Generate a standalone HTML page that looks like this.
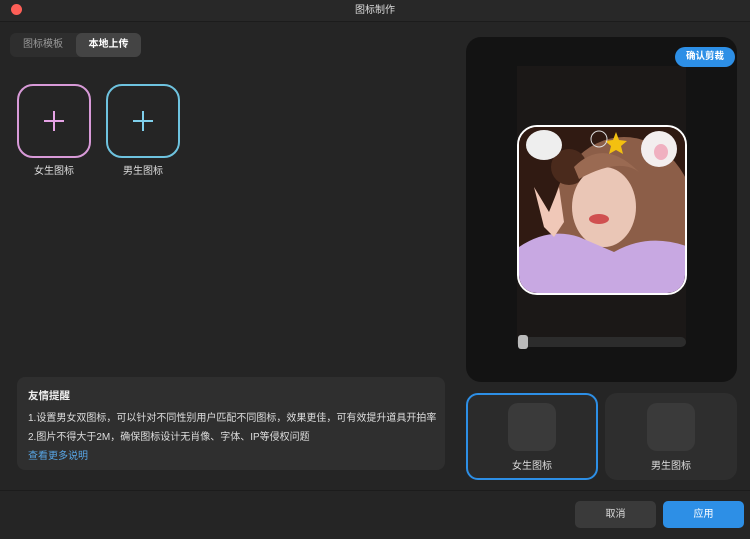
<!DOCTYPE html>
<html><head><meta charset="utf-8"><style>
*{margin:0;padding:0;box-sizing:border-box}
body{width:750px;height:539px;background:#252525;font-family:"Liberation Sans","Noto Sans CJK SC",sans-serif;color:#ddd;position:relative;overflow:hidden}
.abs{position:absolute}
.title{left:0;top:0;width:750px;height:22px;border-bottom:1px solid #1c1c1c;background:#282828;text-align:center;font-size:10px;line-height:21px;color:#ddd}
.dot{left:11px;top:4px;width:11px;height:11px;border-radius:50%;background:#fe5f57}
.tabs{left:10px;top:33px;width:131px;height:24px;border-radius:6px;background:#2e2e2e;font-size:10px}
.tabs span{position:absolute;top:0;height:24px;line-height:24px;text-align:center}
.card{width:74px;height:74px;border-radius:16px;border:2px solid}
.card svg{position:absolute;left:25px;top:25px}
.lbl{font-size:10px;color:#ddd;text-align:center;width:90px}
.tips{left:17px;top:377px;width:428px;height:93px;border-radius:8px;background:#2f2f2f;font-size:10px;color:#ddd}
.tips div{position:absolute;left:11px}
.bc{top:393px;width:132px;height:87px;border-radius:12px;background:#2e2e2e;font-size:10px;text-align:center}
.ph{position:absolute;left:42px;top:10px;width:48px;height:48px;border-radius:10px;background:#3a3a3a}
.btn{top:501px;width:81px;height:27px;border-radius:5px;font-size:10px;text-align:center;line-height:27px}
</style></head><body>
<div class="abs title">图标制作</div>
<div class="abs dot"></div>
<div class="abs tabs"><span style="left:0;width:66px;color:#999">图标模板</span><span style="left:66px;width:65px;background:#444;border-radius:6px;color:#fff;font-weight:bold">本地上传</span></div>
<div class="abs card" style="left:17px;top:84px;border-color:#d89ad8"><svg width="20" height="20"><path d="M10 0V20M0 10H20" stroke="#e6a3e6" stroke-width="2"/></svg></div>
<div class="abs card" style="left:106px;top:84px;border-color:#6ec3df"><svg width="20" height="20"><path d="M10 0V20M0 10H20" stroke="#7fd0ec" stroke-width="2"/></svg></div>
<div class="abs lbl" style="left:9px;top:162px">女生图标</div>
<div class="abs lbl" style="left:98px;top:162px">男生图标</div>

<div class="abs" style="left:466px;top:37px;width:271px;height:345px;border-radius:15px;background:#131313"></div>
<div class="abs" style="left:517px;top:66px;width:169px;height:278px;background:#1b1817"></div>
<div class="abs" style="left:675px;top:47px;width:60px;height:20px;border-radius:10px;background:#2d8fe6;color:#fff;font-size:9.5px;font-weight:bold;text-align:center;line-height:20px">确认剪裁</div>
<div class="abs" style="left:517px;top:125px;width:170px;height:170px;border-radius:20px;border:2px solid #fff;overflow:hidden;background:#2a1510">
<svg width="170" height="170" viewBox="0 0 170 170">
<rect width="170" height="170" fill="#301a12"/>
<ellipse cx="105" cy="95" rx="72" ry="85" fill="#8c5e48"/>
<ellipse cx="50" cy="40" rx="18" ry="18" fill="#4a2a1c"/>
<ellipse cx="85" cy="80" rx="32" ry="40" fill="#eac6b6"/>
<path d="M55 40 Q85 10 120 45 Q100 30 60 52Z" fill="#9a6a52"/>
<ellipse cx="80" cy="92" rx="10" ry="5" fill="#d05050"/>
<ellipse cx="25" cy="18" rx="18" ry="15" fill="#eee"/>
<ellipse cx="140" cy="22" rx="18" ry="18" fill="#f3eeee"/>
<ellipse cx="142" cy="25" rx="7" ry="8" fill="#f0b0c0"/>
<path d="M0 120 Q30 100 60 110 L95 125 Q130 105 170 120 L170 170 L0 170Z" fill="#c8a8e2"/>
<path d="M15 60 L30 85 L40 60 L45 95 L35 110 L25 100Z" fill="#f0c8b8"/>
<path d="M97 5 l3 8 8 1 -6 5 2 8 -7 -4 -7 4 2 -8 -6 -5 8 -1z" fill="#f3c010"/>
<circle cx="80" cy="12" r="8" fill="none" stroke="#ddd" stroke-width="1"/>
</svg></div>
<div class="abs" style="left:517px;top:337px;width:169px;height:10px;border-radius:5px;background:#2c2c2c"></div>
<div class="abs" style="left:518px;top:335px;width:10px;height:14px;border-radius:3px;background:#bbb"></div>

<div class="abs tips">
<div style="top:11px;font-weight:bold;font-size:10.5px;color:#eee">友情提醒</div>
<div style="top:32px">1.设置男女双图标，可以针对不同性别用户匹配不同图标，效果更佳，可有效提升道具开拍率</div>
<div style="top:51px">2.图片不得大于2M，确保图标设计无肖像、字体、IP等侵权问题</div>
<div style="top:70px;color:#58a6e6">查看更多说明</div>
</div>

<div class="abs bc" style="left:466px;border:2px solid #2d8fe6;background:#2b2b2b"><div class="ph" style="left:40px;top:8px"></div><div style="position:absolute;top:62px;width:100%">女生图标</div></div>
<div class="abs bc" style="left:605px"><div class="ph"></div><div style="position:absolute;top:64px;width:100%">男生图标</div></div>

<div class="abs" style="left:0;top:490px;width:750px;height:1px;background:#1c1c1c"></div>
<div class="abs btn" style="left:575px;background:#3a3a3a;color:#ddd">取消</div>
<div class="abs btn" style="left:663px;background:#2d8fe6;color:#fff">应用</div>
</body></html>
